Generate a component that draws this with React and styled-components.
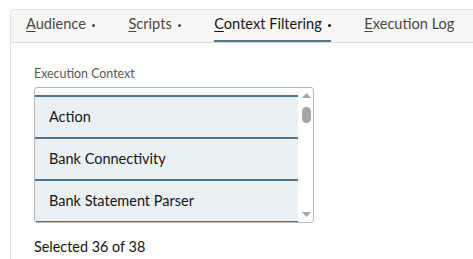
import React from "react";
import styled, { createGlobalStyle } from "styled-components";

const Global = createGlobalStyle`
  html, body { margin: 0; padding: 0; background: #ffffff; overflow: hidden; }
  body { font-family: Lato, "Noto Sans", sans-serif; color: #161513; }
`;

const Page = styled.div`
  display: flex;
  padding: 9px 0 0 10px;
  width: 473px;
  height: 259px;
  box-sizing: border-box;
`;

const Panel = styled.section`
  flex: 1;
  border: 1px solid #e1dfdc;
  border-right: none;
  border-bottom: none;
  border-radius: 5px 0 0 0;
  background: #ffffff;
`;

const TabBar = styled.nav`
  display: flex;
  gap: 33.5px;
  height: 32px;
  padding-left: 15px;
  background: #f8f7f5;
  border-bottom: 1px solid #dcdad7;
  border-radius: 5px 0 0 0;
`;

const Tab = styled.div`
  display: flex;
  align-items: flex-start;
  box-sizing: border-box;
  height: 32px;
  padding-top: 4px;
  font-size: 14.6px;
  line-height: 20px;
  white-space: nowrap;
  color: ${(p) => (p.$active ? "#161513" : "#4a4743")};
  border-bottom: 2px solid ${(p) => (p.$active ? "#4f7594" : "transparent")};
  u { text-decoration-thickness: 1px; text-underline-offset: 2px; }
`;

const Dot = styled.span`
  width: 3px;
  height: 3px;
  margin: 10px 0 0 6px;
  border-radius: 50%;
  background: currentColor;
`;

const Body = styled.div`
  padding: 23px 0 0 23px;
`;

const Label = styled.div`
  font-size: 12.4px;
  line-height: 16px;
  color: #5a5753;
  margin-bottom: 5px;
`;

const ListBox = styled.div`
  display: flex;
  width: 280px;
  height: 136px;
  box-sizing: border-box;
  border: 1px solid #b9b7b4;
  border-radius: 3px;
  overflow: hidden;
`;

const List = styled.ul`
  flex: 1;
  margin: 0;
  padding: 7px 0 0;
  list-style: none;
  overflow: hidden;
`;

const Item = styled.li`
  height: 40px;
  padding-left: 14px;
  border-top: 2px solid #4f7594;
  background: ${(p) => (p.$selected ? "#eaf1f5" : "#ffffff")};
  font-size: 14.5px;
  line-height: 40px;
  color: #161513;
  &:last-child { border-bottom: 2px solid #4f7594; }
`;

const ScrollBar = styled.div`
  display: flex;
  flex-direction: column;
  align-items: center;
  width: 15px;
  padding: 5px 0 5px 1px;
  box-sizing: border-box;
`;

const Thumb = styled.div`
  width: 9px;
  height: 16px;
  margin-top: 9px;
  border-radius: 5px;
  background: #a6a6a6;
`;

const Spacer = styled.div`
  flex: 1;
`;

const Footer = styled.div`
  margin-top: 14px;
  font-size: 14.4px;
  line-height: 20px;
  color: #161513;
`;

const Arrow = ({ down }) => (
  <svg width="9" height="5" viewBox="0 0 9 5">
    <polygon
      points={down ? "0,0 9,0 4.5,5" : "4.5,0 9,5 0,5"}
      fill="#a3a3a3"
    />
  </svg>
);

const tabs = [
  { label: "Audience", dot: true },
  { label: "Scripts", dot: true },
  { label: "Context Filtering", dot: true, active: true },
  { label: "Execution Log", dot: false },
];

const items = ["Action", "Bank Connectivity", "Bank Statement Parser"];

export default function App() {
  return (
    <>
      <Global />
      <Page>
        <Panel>
          <TabBar>
            {tabs.map((t) => (
              <Tab key={t.label} $active={t.active}>
                <span>
                  <u>{t.label[0]}</u>
                  {t.label.slice(1)}
                </span>
                {t.dot && <Dot />}
              </Tab>
            ))}
          </TabBar>
          <Body>
            <Label>Execution Context</Label>
            <ListBox>
              <List>
                {items.map((it) => (
                  <Item key={it} $selected>
                    {it}
                  </Item>
                ))}
              </List>
              <ScrollBar>
                <Arrow />
                <Thumb />
                <Spacer />
                <Arrow down />
              </ScrollBar>
            </ListBox>
            <Footer>Selected 36 of 38</Footer>
          </Body>
        </Panel>
      </Page>
    </>
  );
}
